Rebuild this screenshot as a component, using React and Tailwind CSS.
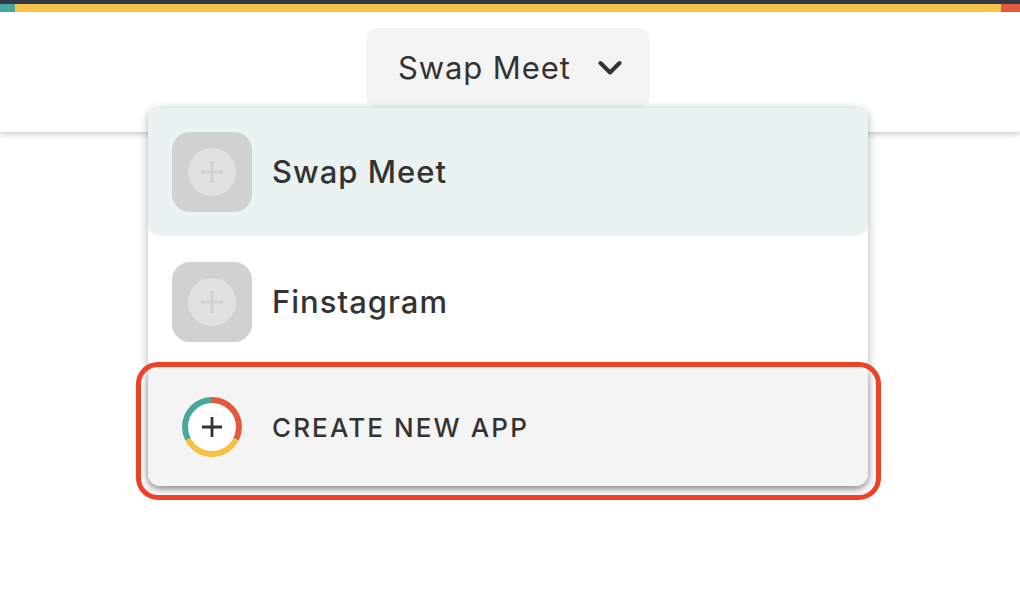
function Placeholder() {
  return (
    <div className="w-20 h-20 shrink-0 rounded-[18px] bg-[#d1d1d1] flex items-center justify-center">
      <div className="w-12 h-12 rounded-full bg-[#e1e1e1] flex items-center justify-center">
        <svg width="24" height="24" viewBox="0 0 24 24" fill="none" stroke="#d1d1d1" strokeWidth="3">
          <path d="M12 1v22M1 12h22" />
        </svg>
      </div>
    </div>
  );
}

function Ring() {
  return (
    <svg width="60" height="60" viewBox="0 0 60 60" fill="none">
      <circle cx="30" cy="30" r="24" fill="#fff" />
      <g transform="rotate(-90 30 30)" strokeWidth="6">
        <circle cx="30" cy="30" r="27" pathLength="360" stroke="#e25b3f" strokeDasharray="117 243" strokeDashoffset="0" />
        <circle cx="30" cy="30" r="27" pathLength="360" stroke="#f4c145" strokeDasharray="126 234" strokeDashoffset="-117" />
        <circle cx="30" cy="30" r="27" pathLength="360" stroke="#48a79a" strokeDasharray="117 243" strokeDashoffset="-243" />
      </g>
      <path d="M30 20v20M20 30h20" stroke="#333" strokeWidth="2.8" />
    </svg>
  );
}

export default function App() {
  const font = { fontFamily: '"Inter", "Open Sans", sans-serif' };
  return (
    <div className="relative w-[1020px] h-[612px] bg-white overflow-hidden text-[#333]" style={font}>
      <div className="h-1 bg-[#343846]" />
      <div className="h-2 flex">
        <div className="w-[15px] bg-[#48a79a]" />
        <div className="flex-1 bg-[#f7c34b]" />
        <div className="w-[19px] bg-[#e25b3f]" />
      </div>
      <header className="h-[120px] bg-white shadow-[0_2px_6px_rgba(0,0,0,0.22)] flex justify-center pt-4 pr-1">
        <button className="w-[284px] h-20 rounded-xl bg-[#f4f4f4] flex items-center pl-8 pr-7 justify-between">
          <span className="text-[31px] font-normal tracking-[0.9px]">Swap Meet</span>
          <svg width="24" height="16" viewBox="0 0 24 16" fill="none" stroke="#333" strokeWidth="4" strokeLinecap="round" strokeLinejoin="round">
            <path d="M2.5 3l9.5 9.5L21.5 3" />
          </svg>
        </button>
      </header>

      <div className="absolute left-[148px] top-[108px] w-[720px] rounded-xl bg-white shadow-[0_2px_10px_rgba(0,0,0,0.3)]">
        <div className="h-[128px] rounded-xl bg-[#eaf3f2] flex items-center pl-6 gap-5">
          <Placeholder />
          <span className="text-[31px] font-[550] tracking-[1px]">Swap Meet</span>
        </div>
        <div className="h-[128px] mt-0.5 mb-0.5 flex items-center pl-6 gap-5">
          <Placeholder />
          <span className="text-[31px] font-[550] tracking-[1px]">Finstagram</span>
        </div>
        <div className="h-[118px] rounded-xl bg-[#f4f4f4] flex items-center pl-[34px] gap-[30px] shadow-[0_3px_6px_rgba(0,0,0,0.28)]">
          <Ring />
          <span className="text-[26px] font-medium tracking-[2.1px]">CREATE NEW APP</span>
        </div>
      </div>

      <div className="absolute left-[136px] top-[362px] w-[745px] h-[138px] rounded-[22px] border-[5px] border-[#ee4226] pointer-events-none" />
    </div>
  );
}
